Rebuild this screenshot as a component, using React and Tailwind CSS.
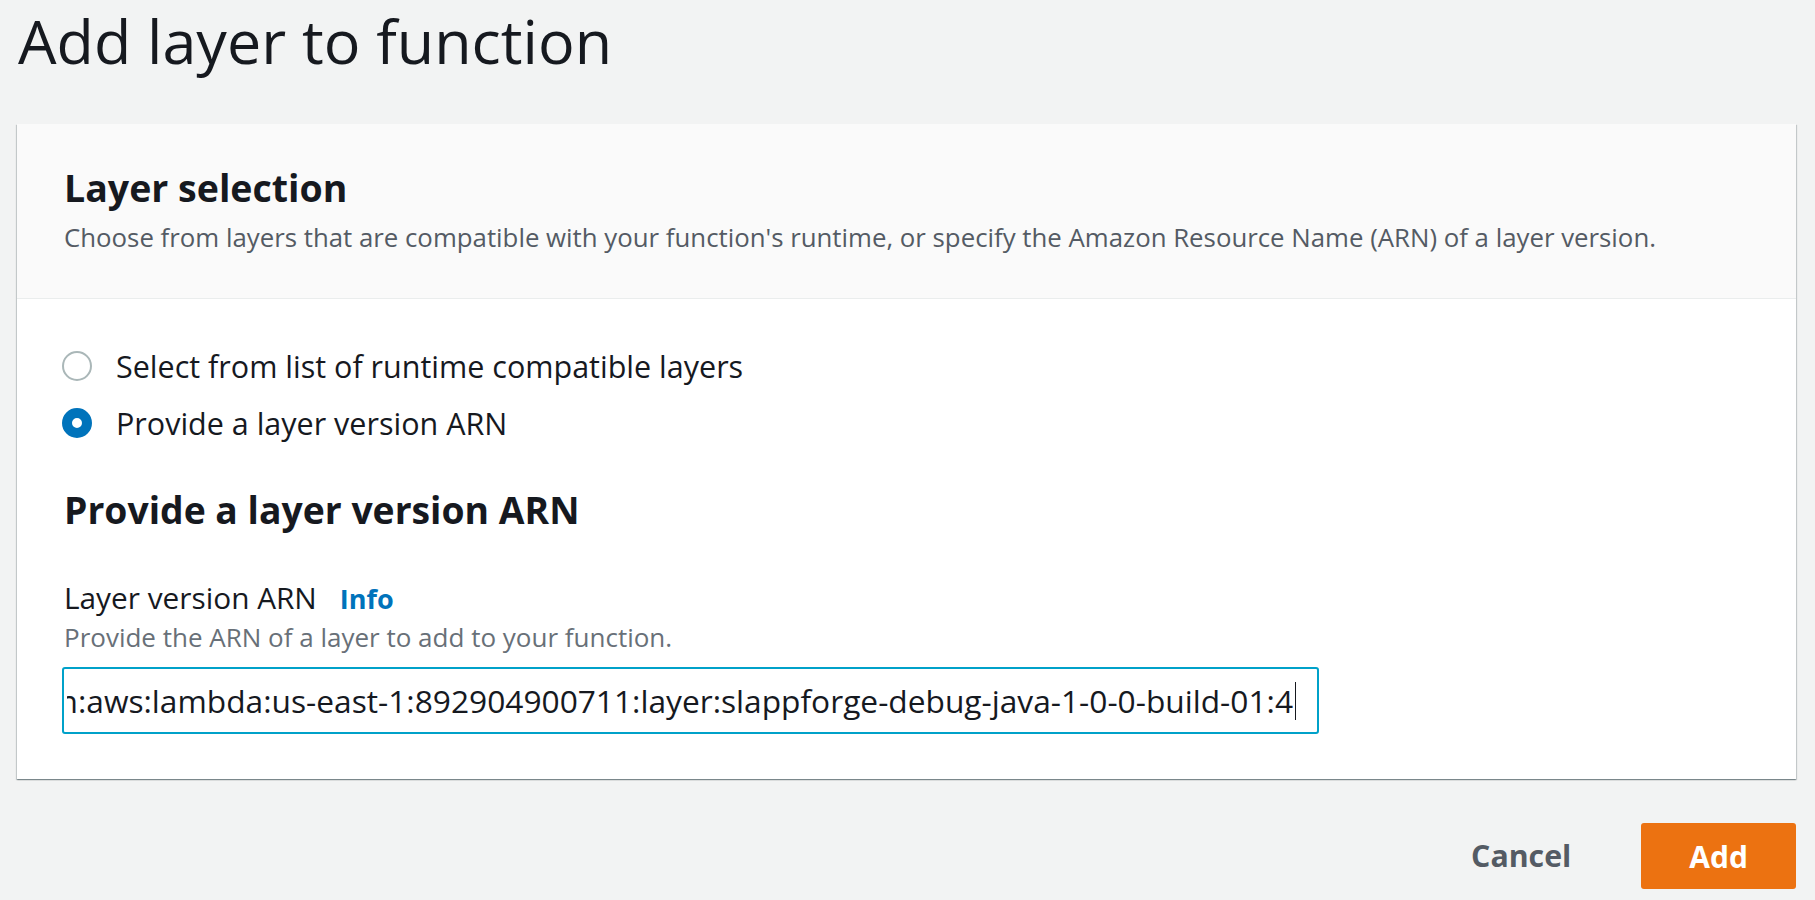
import { useState } from "react"

const ARN = "arn:aws:lambda:us-east-1:892904900711:layer:slappforge-debug-java-1-0-0-build-01:4"

function Radio({ checked, label, onClick }) {
  return (
    <div className="flex h-[40px] items-center gap-[24px] cursor-pointer" onClick={onClick}>
      <span
        className={`h-[30px] w-[30px] shrink-0 rounded-full bg-white ${
          checked ? "border-[10px] border-[#0073bb]" : "border-2 border-[#aab7b8]"
        }`}
      />
      <span className="text-[30.5px] leading-[40px] text-[#16191f]">{label}</span>
    </div>
  )
}

export default function App() {
  const [mode, setMode] = useState("arn")

  return (
    <div className="min-h-[900px] bg-[#f2f3f3] pl-[17px] pr-[19px] pt-[1px] font-['Open_Sans',sans-serif] text-[#16191f]">
      <h1 className="pl-[1px] text-[61px] font-normal leading-[80px]">Add layer to function</h1>

      <div className="mt-[43px] bg-white shadow-[0_1px_1px_0_rgba(0,28,36,0.3),1px_1px_1px_0_rgba(0,28,36,0.15),-1px_1px_1px_0_rgba(0,28,36,0.15)]">
        <div className="border-b border-[#eaeded] bg-[#fafafa] pl-[47px] pt-[40px] pb-[44px]">
          <h2 className="text-[37.5px] font-bold leading-[48px]">Layer selection</h2>
          <p className="mt-[8px] text-[25.8px] leading-[34px] text-[#545b64]">
            Choose from layers that are compatible with your function's runtime, or specify the Amazon Resource Name (ARN) of a layer version.
          </p>
        </div>

        <div className="pl-[45px] pt-[47px] pb-[45px]">
          <div className="flex flex-col gap-[17px]">
            <Radio
              checked={mode === "list"}
              label="Select from list of runtime compatible layers"
              onClick={() => setMode("list")}
            />
            <Radio checked={mode === "arn"} label="Provide a layer version ARN" onClick={() => setMode("arn")} />
          </div>

          <h3 className="mt-[44px] pl-[2px] text-[37.3px] font-bold leading-[46px]">Provide a layer version ARN</h3>

          <div className="mt-[45px] flex items-baseline gap-[23px] pl-[2px]">
            <span className="text-[29.8px] leading-[40px]">Layer version ARN</span>
            <a className="text-[27px] font-bold leading-[40px] text-[#0073bb]">Info</a>
          </div>
          <p className="mt-[1px] pl-[2px] text-[26px] leading-[34px] text-[#687078]">
            Provide the ARN of a layer to add to your function.
          </p>

          <div className="mt-[13px] flex h-[67px] w-[1257px] items-center rounded-[3px] border-2 border-[#00a1c9] bg-white pl-[3px] pr-[21px]">
            <div className="flex min-w-0 flex-1 items-center justify-end overflow-hidden">
              <span className="whitespace-nowrap text-[31.7px] leading-[40px] text-[#16191f]">{ARN}</span>
              <span className="ml-[2px] h-[38px] w-px shrink-0 bg-[#16191f]" />
            </div>
          </div>
        </div>
      </div>

      <div className="mt-[44px] flex items-center justify-end gap-[50px]">
        <button className="px-[20px] text-[30.3px] font-bold leading-[66px] text-[#545b64]">Cancel</button>
        <button className="h-[66px] rounded-[3px] bg-[#ec7211] px-[48px] text-[30px] font-bold text-white">Add</button>
      </div>
    </div>
  )
}
